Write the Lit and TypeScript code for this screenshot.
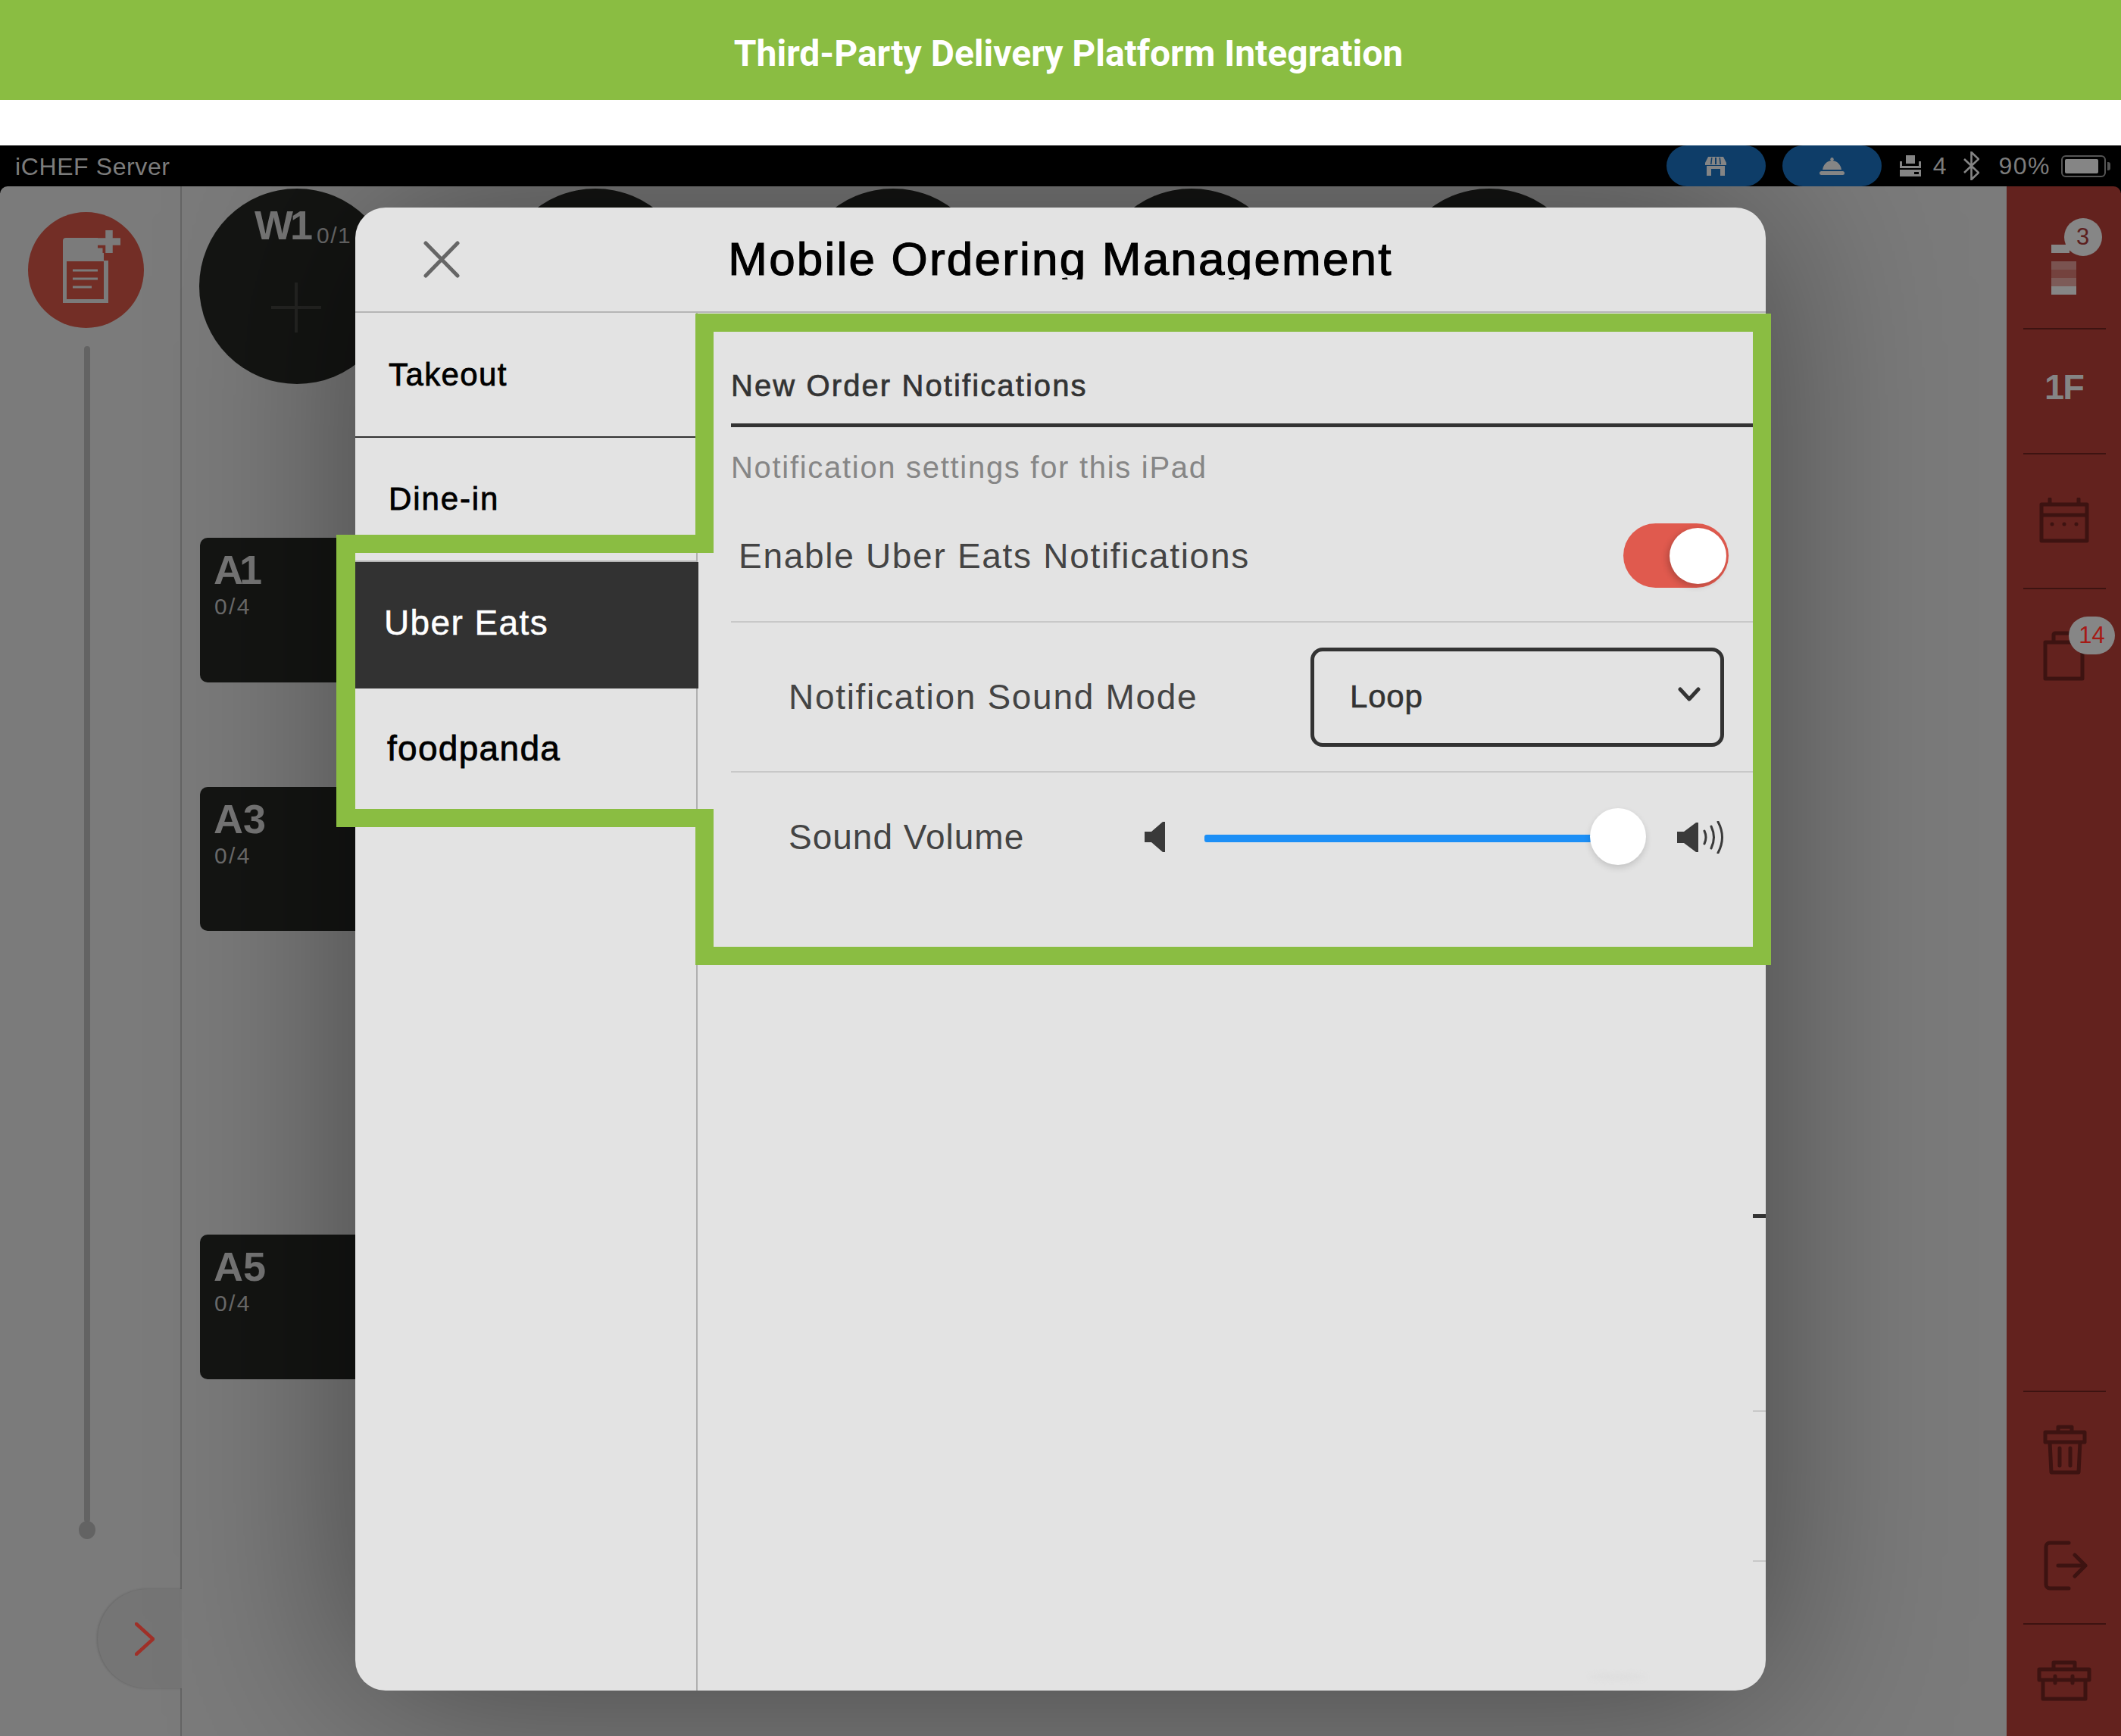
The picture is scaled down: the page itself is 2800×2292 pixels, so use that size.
import { LitElement, html, css, svg } from "lit";
import { customElement } from "lit/decorators.js";

const CIRCLES = [392, 785.5, 1179, 1572.5, 1966];
const CARDS = [
  { name: "A1", top: 710, height: 191 },
  { name: "A3", top: 1039, height: 190 },
  { name: "A5", top: 1630, height: 191 },
];

@customElement("app-root")
export class AppRoot extends LitElement {
  static styles = css`
    :host {
      display: block;
      position: relative;
      width: 2800px;
      height: 2292px;
      background: #fff;
      overflow: hidden;
      font-family: "Liberation Sans", Arial, sans-serif;
    }
    .banner {
      height: 132px;
      background: #8abd42;
      color: #fff;
      display: flex;
      align-items: center;
      justify-content: center;
      font: 700 48px Roboto, sans-serif;
      padding: 8px 0 0 21px;
      box-sizing: border-box;
    }
    .gap { height: 60px; background: #fff; }
    .status {
      height: 54px;
      background: #000;
      color: #7c7c7c;
      display: flex;
      align-items: center;
      font-size: 32px;
    }
    .app-name { margin: 2px 0 0 20px; letter-spacing: 0.6px; flex: 1; }
    .pill {
      width: 131px;
      height: 54px;
      border-radius: 27px;
      background: #0e3d68;
      display: flex;
      align-items: center;
      justify-content: center;
    }
    .pill + .pill { margin-left: 22px; }
    .printer { margin-left: 24px; }
    .count { margin-left: 16px; }
    .bt { margin-left: 23px; }
    .pct { margin-left: 25px; letter-spacing: 1.5px; }
    .battery {
      margin-left: 14px;
      width: 59px;
      height: 29px;
      box-sizing: border-box;
      border: 2px solid #555;
      border-radius: 6px;
      padding: 3px;
      position: relative;
    }
    .battery i { display: block; width: 44px; height: 19px; background: #858585; border-radius: 2px; }
    .nub { width: 4px; height: 11px; background: #555; margin: 0 14px 0 2px; border-radius: 0 3px 3px 0; }

    .main {
      position: relative;
      height: 2046px;
      display: grid;
      grid-template-columns: 240px 1fr 151px;
      background: #000;
      overflow: hidden;
    }
    .left, .canvas, .rail { position: relative; }
    .left {
      background: #7b7b7b;
      border-right: 2px solid #656565;
      box-sizing: border-box;
      border-radius: 10px 0 0 0;
      display: flex;
      flex-direction: column;
    }
    .doc {
      width: 153px;
      height: 153px;
      border-radius: 50%;
      background: #732e26;
      margin: 34px 0 0 37px;
      flex: none;
    }
    .doc svg { display: block; }
    .track {
      width: 8px;
      height: 1553px;
      background: #636363;
      margin: 24px 0 0 111px;
      border-radius: 4px;
      flex: none;
    }
    .dot {
      width: 22px;
      height: 24px;
      border-radius: 50%;
      background: #636363;
      margin: -2px 0 0 104px;
      flex: none;
    }
    .tab {
      position: absolute;
      left: 129px;
      top: 1852px;
      width: 111px;
      height: 131px;
      border-radius: 66px 0 0 66px;
      background: #757575;
      box-shadow: -1px 0 3px rgba(0, 0, 0, 0.18);
      display: flex;
      align-items: center;
      padding-left: 49px;
      box-sizing: border-box;
    }
    .canvas { background: #7b7b7b; }
    .circle {
      position: absolute;
      top: 3px;
      width: 258px;
      height: 258px;
      margin-left: -369px;
      border-radius: 50%;
      background: #141513;
    }
    .plus { position: absolute; left: 95px; top: 124px; }
    .w1 { position: absolute; left: 73px; top: 17px; font-size: 54px; font-weight: 700; color: #777; white-space: nowrap; letter-spacing: -4px; }
    .w1 small { position: relative; top: 5px; font-size: 30px; font-weight: 400; color: #6c6c6c; margin-left: 9px; letter-spacing: 1.5px; }
    .card {
      position: absolute;
      left: 24px;
      width: 300px;
      background: #141513;
      border-radius: 10px;
    }
    .card b { position: absolute; left: 18px; top: 11px; font-size: 54px; line-height: 62px; color: #777; }
    .card b.tight { letter-spacing: -5px; }
    .card span { position: absolute; left: 19px; top: 73px; font-size: 30px; line-height: 36px; color: #6c6c6c; letter-spacing: 2.4px; }

    .rail {
      background: #63221e;
      border-radius: 0 10px 0 0;
      display: flex;
      flex-direction: column;
    }
    .hr { height: 2px; background: #3d1311; margin: 0 20px 0 22px; flex: none; }
    .cell { display: flex; justify-content: center; align-items: center; flex: none; }
    .cell svg { display: block; }
    .c1 { height: 187px; padding-top: 77px; box-sizing: border-box; align-items: flex-start; }
    .c2 { height: 163px; padding-bottom: 13px; box-sizing: border-box; font-size: 47px; font-weight: 700; color: #858585; letter-spacing: -2px; }
    .c3 { height: 176px; padding-bottom: 2px; box-sizing: border-box; }
    .c4 { height: 176px; }
    .grow { flex: 1; }
    .c5 { height: 152px; padding-left: 2px; box-sizing: border-box; }
    .c6 { height: 153px; padding-left: 5px; box-sizing: border-box; }
    .c7 { height: 147px; }
    .icon { position: relative; }
    .badge {
      position: absolute;
      background: #868686;
      display: flex;
      align-items: center;
      justify-content: center;
      font-size: 31px;
    }
    .b3 { left: 17px; top: -35px; width: 50px; height: 50px; border-radius: 50%; color: #5c201e; }
    .b14 { left: 34px; top: -19px; width: 61px; height: 50px; border-radius: 25px; color: #a51a15; }

    .modal {
      position: absolute;
      left: 469px;
      top: 28px;
      width: 1862px;
      height: 1958px;
      background: #e3e3e3;
      border-radius: 40px;
      box-shadow: 0 0 440px rgba(0, 0, 0, 0.44);
      display: flex;
      flex-direction: column;
      overflow: hidden;
    }
    .m-head {
      height: 139px;
      flex: none;
      box-sizing: border-box;
      border-bottom: 2px solid #b5b5b5;
      display: grid;
      grid-template-columns: 1fr auto 1fr;
    }
    .close { padding: 44px 0 0 90px; }
    .close svg { display: block; }
    .m-title {
      margin: 38px 0 0;
      height: 57px;
      overflow: hidden;
      font-size: 62px;
      line-height: 60px;
      font-weight: 400;
      letter-spacing: 2.2px;
      color: #000;
      -webkit-text-stroke: 1.2px #000;
      white-space: nowrap;
    }
    .m-body { flex: 1; display: flex; min-height: 0; }
    .side {
      width: 452px;
      flex: none;
      box-sizing: border-box;
      border-right: 2px solid #b0b0b0;
      position: relative;
    }
    .item {
      height: 165px;
      box-sizing: border-box;
      border-bottom: 2px solid #333;
      display: flex;
      align-items: center;
      padding-left: 44px;
      font-size: 42px;
      color: #000;
      -webkit-text-stroke: 0.8px #000;
      letter-spacing: 1.4px;
    }
    .item.dine { height: 164px; border-bottom: 2px solid #b5b5b5; letter-spacing: 1.9px; }
    .item.on {
      height: 167px;
      width: 453px;
      background: #323232;
      color: #fff;
      -webkit-text-stroke: 0.5px #fff;
      border: 0;
      padding: 0 0 7px 38px;
      font-size: 46px;
      letter-spacing: 1.4px;
    }
    .item.last { border: 0; padding: 0 0 8px 42px; font-size: 46px; letter-spacing: 1.3px; }
    .panel { flex: 1; padding: 0 17px 0 44px; min-width: 0; color: #444; }
    .sec {
      height: 151px;
      box-sizing: border-box;
      border-bottom: 5px solid #333;
      padding-top: 76px;
      font-size: 40px;
      line-height: 40px;
      color: #333;
      -webkit-text-stroke: 0.7px #333;
      letter-spacing: 2.1px;
    }
    .note {
      height: 83px;
      box-sizing: border-box;
      padding-top: 33px;
      font-size: 40px;
      line-height: 40px;
      color: #868686;
      letter-spacing: 1.7px;
    }
    .row {
      display: flex;
      align-items: center;
      box-sizing: border-box;
      font-size: 46px;
      letter-spacing: 1.7px;
    }
    .r1 { height: 175px; border-bottom: 2px solid #c8c8c8; padding: 0 32px 0 10px; justify-content: space-between; }
    .r2 { height: 198px; border-bottom: 2px solid #c8c8c8; padding: 0 38px 0 76px; justify-content: space-between; }
    .r3 { height: 170px; padding: 0 38px 0 76px; }
    .toggle {
      width: 139px;
      height: 85px;
      border-radius: 43px;
      background: #e05a4e;
      position: relative;
    }
    .toggle i {
      position: absolute;
      right: 3px;
      top: 6px;
      width: 75px;
      height: 74px;
      border-radius: 50%;
      background: #fff;
      box-shadow: -3px 3px 8px rgba(0, 0, 0, 0.2);
    }
    .select {
      width: 546px;
      height: 131px;
      box-sizing: border-box;
      border: 5px solid #333;
      border-radius: 16px;
      display: flex;
      align-items: center;
      justify-content: space-between;
      padding: 0 26px 0 47px;
      font-size: 42px;
      color: #333;
      -webkit-text-stroke: 0.6px #333;
      letter-spacing: 0.8px;
    }
    .select svg { margin-top: -6px; }
    .vol-label { margin-right: auto; letter-spacing: 1px; }
    .slider { width: 583px; height: 76px; margin: 0 41px 0 52px; position: relative; display: flex; align-items: center; }
    .slider .fill { width: 512px; height: 10px; background: #1c8ff6; border-radius: 3px; margin-top: 3px; }
    .slider i {
      position: absolute;
      right: 0;
      top: 0;
      width: 74px;
      height: 75px;
      border-radius: 50%;
      background: #fff;
      box-shadow: 0 4px 8px rgba(0, 0, 0, 0.14);
    }
    .edge { position: absolute; left: 1845px; width: 17px; }
    .edge.dark { top: 1329px; height: 5px; background: #333; }
    .edge.l1 { top: 1588px; height: 2px; background: #c8c8c8; }
    .edge.l2 { top: 1786px; height: 2px; background: #c8c8c8; }
    .smudge {
      position: absolute;
      left: 1630px;
      top: 1936px;
      width: 72px;
      height: 8px;
      border-radius: 50%;
      background: #dedede;
      filter: blur(3px);
    }
    .frame { position: absolute; left: 0; top: 0; pointer-events: none; }
  `;

  private railLine(d: string) {
    return svg`<path d=${d} fill="none" stroke="#3d1311" stroke-width="5" stroke-linecap="round" stroke-linejoin="round"/>`;
  }

  render() {
    return html`
      <div class="banner">Third-Party Delivery Platform Integration</div>
      <div class="gap"></div>
      <div class="status">
        <span class="app-name">iCHEF Server</span>
        <div class="pill">
          <svg width="28" height="25" viewBox="0 0 28 25" fill="#858585">
            <path d="M4 0h20l4 8v3H0V8z" />
            <path d="M8 1h1.5l-1 9H7zM18.5 1H20l1 9h-1.5zM13 1h2v9h-2z" fill="#0e3d68" />
            <path d="M2 12h24v13h-6v-9H8v9H2z" />
          </svg>
        </div>
        <div class="pill">
          <svg width="33" height="23" viewBox="0 0 33 23" fill="#858585">
            <circle cx="16.5" cy="2.2" r="2.2" />
            <path d="M4 16C5 9 10 4 16.5 4S28 9 29 16z" />
            <rect x="0" y="18" width="33" height="5" rx="2.5" />
          </svg>
        </div>
        <svg class="printer" width="28" height="28" viewBox="0 0 28 28" fill="#858585">
          <path d="M8 0h12v11H8z" />
          <path d="M0 8h3v6h22V8h3v9H0z" />
          <path d="M0 19h28v9H0zM19 22v3h6v-3z" fill-rule="evenodd" />
        </svg>
        <span class="count">4</span>
        <svg class="bt" width="21" height="38" viewBox="0 0 21 38" fill="none" stroke="#858585" stroke-width="2.6">
          <path d="M1 10l19 18-9.500 9V1L20 10 1 28" />
        </svg>
        <span class="pct">90%</span>
        <div class="battery"><i></i></div>
        <div class="nub"></div>
      </div>

      <div class="main">
        <div class="left">
          <div class="doc">
            <svg width="153" height="153" viewBox="0 0 153 153">
              <path d="M46 38a4 4 0 0 1 4-4h42v12h8v18h6v56H46z" fill="#7b7b7b" />
              <rect x="51" y="65" width="49" height="50" fill="#732e26" />
              <path d="M59 77h33M59 88h33M59 99h25" stroke="#7b7b7b" stroke-width="3" />
              <path d="M92 39h30M107 24v30" stroke="#732e26" stroke-width="17" />
              <path d="M92 39h30M107 24v30" stroke="#7b7b7b" stroke-width="9.500" />
            </svg>
          </div>
          <div class="track"></div>
          <div class="dot"></div>
          <div class="tab">
            <svg width="26" height="44" viewBox="0 0 26 44" fill="none" stroke="#9f3028" stroke-width="4.500" stroke-linecap="round" stroke-linejoin="round">
              <path d="M2 2l22 20L2 42" />
            </svg>
          </div>
        </div>

        <div class="canvas">
          ${CIRCLES.map(
            (x, i) => html`
              <div class="circle" style="left:${x - 240 + 369 - 129}px">
                ${i === 0
                  ? html`<div class="w1">W1<small>0/1</small></div>
                      <svg class="plus" width="68" height="68" viewBox="0 0 68 68" stroke="#252523" stroke-width="4">
                        <path d="M0 33h66M33 0v66" />
                      </svg>`
                  : ""}
              </div>
            `
          )}
          ${CARDS.map(
            (c) => html`
              <div class="card" style="top:${c.top - 246}px;height:${c.height}px">
                <b class=${c.name === "A1" ? "tight" : ""}>${c.name}</b><span>0/4</span>
              </div>
            `
          )}
        </div>

        <div class="rail">
          <div class="cell c1">
            <div class="icon">
              <svg width="34" height="66" viewBox="0 0 34 66">
                <rect x="0" y="0" width="24" height="11" fill="#868686" />
                <rect x="0" y="22" width="33" height="11" fill="#7a5350" />
                <rect x="0" y="33" width="33" height="11" fill="#74423e" />
                <rect x="0" y="44" width="33" height="11" fill="#7d5b58" />
                <rect x="0" y="55" width="33" height="11" fill="#868686" />
              </svg>
              <div class="badge b3">3</div>
            </div>
          </div>
          <div class="hr"></div>
          <div class="cell c2">1F</div>
          <div class="hr"></div>
          <div class="cell c3">
            <svg width="66" height="60" viewBox="0 0 66 60">
              ${this.railLine("M3 9h60v48H3zM3 23h60M14 2v7M52 2v7")}
              <circle cx="17" cy="35" r="2.500" fill="#3d1311" />
              <circle cx="33" cy="35" r="2.500" fill="#3d1311" />
              <circle cx="49" cy="35" r="2.500" fill="#3d1311" />
            </svg>
          </div>
          <div class="hr"></div>
          <div class="cell c4">
            <div class="icon">
              <svg width="55" height="66" viewBox="0 0 55 66">
                ${this.railLine("M3 15h49v48H3zM14 15V5a2 2 0 0 1 2-2h26")}
              </svg>
              <div class="badge b14">14</div>
            </div>
          </div>
          <div class="grow"></div>
          <div class="hr"></div>
          <div class="cell c5">
            <svg width="58" height="66" viewBox="0 0 58 66">
              ${this.railLine("M3 10h52v13H3zM20 10V3h18v7M9 23l2 40h36l2-40M22 31v23M36 31v23")}
            </svg>
          </div>
          <div class="cell c6">
            <svg width="58" height="66" viewBox="0 0 58 66">
              ${this.railLine("M33 3H8a5 5 0 0 0-5 5v50a5 5 0 0 0 5 5h25M19 33h36M41 19l14 14-14 14")}
            </svg>
          </div>
          <div class="hr"></div>
          <div class="cell c7">
            <svg width="72" height="54" viewBox="0 0 72 54">
              ${this.railLine("M3 12h66v14H3zM22 12V3h28v9M8 26v25h56V26M24 21v9M47 21v9")}
            </svg>
          </div>
        </div>

        <div class="modal">
          <div class="m-head">
            <div class="close">
              <svg width="48" height="49" viewBox="0 0 48 49" fill="none" stroke="#666" stroke-width="5" stroke-linecap="round">
                <path d="M3 3l42 43M45 3L3 46" />
              </svg>
            </div>
            <h1 class="m-title">Mobile Ordering Management</h1>
            <div></div>
          </div>
          <div class="m-body">
            <div class="side">
              <div class="item">Takeout</div>
              <div class="item dine">Dine-in</div>
              <div class="item on">Uber Eats</div>
              <div class="item last">foodpanda</div>
            </div>
            <div class="panel">
              <div class="sec">New Order Notifications</div>
              <div class="note">Notification settings for this iPad</div>
              <div class="row r1">
                <span>Enable Uber Eats Notifications</span>
                <div class="toggle"><i></i></div>
              </div>
              <div class="row r2">
                <span>Notification Sound Mode</span>
                <div class="select">
                  <span>Loop</span>
                  <svg width="30" height="20" viewBox="0 0 30 20" fill="none" stroke="#333" stroke-width="5" stroke-linecap="round" stroke-linejoin="round">
                    <path d="M3 3l12 13L27 3" />
                  </svg>
                </div>
              </div>
              <div class="row r3">
                <span class="vol-label">Sound Volume</span>
                <svg width="27" height="40" viewBox="0 0 27 40" fill="#3a3a3a">
                  <path d="M0 13h9L24 0h3v40h-3L9 27H0z" />
                </svg>
                <div class="slider"><div class="fill"></div><i></i></div>
                <svg width="62" height="43" viewBox="0 0 62 43" fill="none" stroke="#3a3a3a" stroke-width="3" stroke-linecap="round">
                  <path d="M0 14h9L25 2h3v39h-3L9 29H0z" fill="#3a3a3a" stroke="none" />
                  <path d="M36 13q4 8.500 0 17M45 7q7 14.500 0 29M54 1q11 20.500 0 41" />
                </svg>
              </div>
            </div>
          </div>
          <div class="edge dark"></div>
          <div class="edge l1"></div>
          <div class="edge l2"></div>
          <div class="smudge"></div>
        </div>
      </div>

      <svg class="frame" width="2800" height="2292" viewBox="0 0 2800 2292">
        <path
          fill="#8abd42"
          fill-rule="evenodd"
          d="M918 414H2338V1274H918V1092H444V706H918ZM942 438V730H469V1068H942V1250H2314V438Z"
        />
      </svg>
    `;
  }
}
